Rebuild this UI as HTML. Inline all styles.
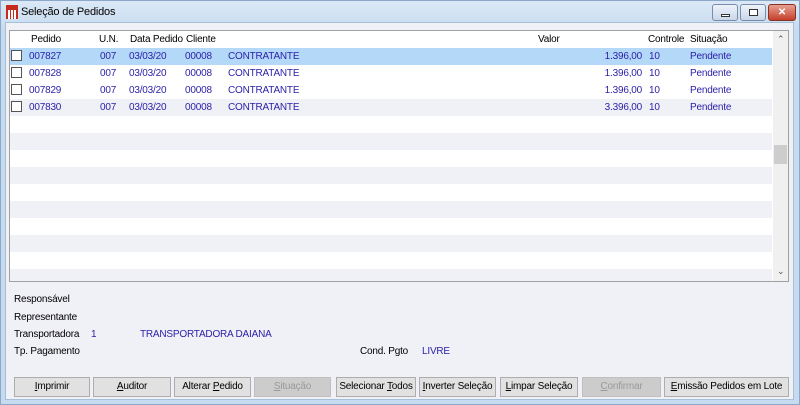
<!DOCTYPE html>
<html><head><meta charset="utf-8"><style>
*{margin:0;padding:0;box-sizing:border-box}
body{width:800px;height:405px;background:#c9dcf0;font-family:"Liberation Sans",sans-serif;font-size:10px;letter-spacing:-0.2px;color:#000;position:relative;overflow:hidden}
.win{position:absolute;left:0;top:0;width:800px;height:405px;background:linear-gradient(#dbe8f6,#c7dbf0 30px);border:1px solid #8ba8c8}
.title{position:absolute;left:20px;top:5px;font-size:11px}
.body{position:absolute;left:5px;top:22px;width:789px;height:378px;background:#f0f0f7;border:1px solid #a8bfd8}
.grid{position:absolute;left:9px;top:30px;width:780px;height:252px;background:#fff;border:1px solid #a0a0a0;overflow:hidden}
.r{position:absolute;left:0;width:762px;height:17px}
.t{position:absolute;white-space:nowrap}
.b{color:#2a1fa8}
.cb{position:absolute;left:2px;width:11px;height:11px;border:1px solid #555;background:#fff}
.sb{position:absolute;left:763px;top:0;width:16px;height:250px;background:#f0f0f0}
.btn{position:absolute;top:377px;height:20px;background:#e1e1e1;border:1px solid #adadad;text-align:center;line-height:18px;white-space:nowrap;overflow:hidden}
.dis{color:#9a9a9a;background:#ccc;border-color:#bfbfbf}
.lbl{position:absolute;white-space:nowrap}
.wb{position:absolute;top:3px;height:17px;border:1px solid #7a8ca8;border-radius:3px;background:linear-gradient(#eef3fa,#c9d7ea)}
.v{position:absolute;width:80px;text-align:right;left:553px;top:4px;white-space:nowrap}
</style></head><body>
<div class="win">
<svg style="position:absolute;left:5px;top:4px" width="12" height="14"><rect x="0" y="0" width="12" height="14" fill="#c62a1c"/><rect x="2" y="5" width="2" height="9" fill="#fff"/><rect x="5" y="5" width="2" height="9" fill="#fff"/><rect x="8" y="5" width="2" height="9" fill="#fff"/></svg>
<div class="title">Seleção de Pedidos</div>
<div class="wb" style="left:711px;width:26px"><div style="position:absolute;left:8px;top:9px;width:9px;height:3px;background:#fff;border:1px solid #333"></div></div>
<div class="wb" style="left:739px;width:26px"><div style="position:absolute;left:8px;top:4px;width:9px;height:7px;border:1px solid #333;background:#fff"></div></div>
<div class="wb" style="left:767px;width:28px;background:linear-gradient(#e8a090,#c4402c);border-color:#8a3020;color:#fff;text-align:center;font-weight:bold;line-height:15px">✕</div>
</div>
<div class="body"></div>
<div class="grid">
<div class="t" style="left:21px;top:3px">Pedido</div>
<div class="t" style="left:89px;top:3px">U.N.</div>
<div class="t" style="left:120px;top:3px">Data Pedido</div>
<div class="t" style="left:176px;top:3px">Cliente</div>
<div class="t" style="left:528px;top:3px">Valor</div>
<div class="t" style="left:638px;top:3px">Controle</div>
<div class="t" style="left:680px;top:3px">Situação</div>
<div class="r" style="top:17px;background:#b3d8f8"></div>
<div class="r" style="top:68px;background:#f0f0f7"></div>
<div class="r" style="top:102px;background:#f0f0f7"></div>
<div class="r" style="top:136px;background:#f0f0f7"></div>
<div class="r" style="top:170px;background:#f0f0f7"></div>
<div class="r" style="top:204px;background:#f0f0f7"></div>
<div class="r" style="top:238px;background:#f0f0f7"></div>
<div class="sb"><div style="position:absolute;left:4px;top:3px;font-size:9px;color:#555">⌃</div><div style="position:absolute;left:1px;top:114px;width:13px;height:19px;background:#cdcdcd"></div><div style="position:absolute;left:4px;top:235px;font-size:9px;color:#555">⌄</div></div>
</div>
<div class="lbl" style="left:14px;top:294px">Responsável</div>
<div class="lbl" style="left:14px;top:312px">Representante</div>
<div class="lbl" style="left:14px;top:329px">Transportadora</div>
<div class="lbl b" style="left:91px;top:329px">1</div>
<div class="lbl b" style="left:140px;top:329px">TRANSPORTADORA DAIANA</div>
<div class="lbl" style="left:14px;top:346px">Tp. Pagamento</div>
<div class="lbl" style="left:360px;top:346px">Cond. Pgto</div>
<div class="lbl b" style="left:422px;top:346px">LIVRE</div>
<div class="btn" style="left:14px;width:76px"><u>I</u>mprimir</div>
<div class="btn" style="left:93px;width:78px"><u>A</u>uditor</div>
<div class="btn" style="left:174px;width:77px">Alterar <u>P</u>edido</div>
<div class="btn dis" style="left:254px;width:77px"><u>S</u>ituação</div>
<div class="btn" style="left:336px;width:80px">Selecionar <u>T</u>odos</div>
<div class="btn" style="left:419px;width:77px"><u>I</u>nverter Seleção</div>
<div class="btn" style="left:500px;width:78px"><u>L</u>impar Seleção</div>
<div class="btn dis" style="left:582px;width:79px"><u>C</u>onfirmar</div>
<div class="btn" style="left:664px;width:125px"><u>E</u>missão Pedidos em Lote</div>
<div style="position:absolute;left:9px;top:47px;width:762px">
 <div style="position:absolute;top:0"><div class="cb" style="top:3px"></div><span class="t b" style="left:20px;top:4px">007827</span><span class="t b" style="left:91px;top:4px">007</span><span class="t b" style="left:120px;top:4px">03/03/20</span><span class="t b" style="left:176px;top:4px">00008</span><span class="t b" style="left:219px;top:4px">CONTRATANTE</span><span class="v b">1.396,00</span><span class="t b" style="left:640px;top:4px">10</span><span class="t b" style="left:681px;top:4px">Pendente</span></div>
 <div style="position:absolute;top:17px"><div class="cb" style="top:3px"></div><span class="t b" style="left:20px;top:4px">007828</span><span class="t b" style="left:91px;top:4px">007</span><span class="t b" style="left:120px;top:4px">03/03/20</span><span class="t b" style="left:176px;top:4px">00008</span><span class="t b" style="left:219px;top:4px">CONTRATANTE</span><span class="v b">1.396,00</span><span class="t b" style="left:640px;top:4px">10</span><span class="t b" style="left:681px;top:4px">Pendente</span></div>
 <div style="position:absolute;top:34px"><div class="cb" style="top:3px"></div><span class="t b" style="left:20px;top:4px">007829</span><span class="t b" style="left:91px;top:4px">007</span><span class="t b" style="left:120px;top:4px">03/03/20</span><span class="t b" style="left:176px;top:4px">00008</span><span class="t b" style="left:219px;top:4px">CONTRATANTE</span><span class="v b">1.396,00</span><span class="t b" style="left:640px;top:4px">10</span><span class="t b" style="left:681px;top:4px">Pendente</span></div>
 <div style="position:absolute;top:51px"><div class="cb" style="top:3px"></div><span class="t b" style="left:20px;top:4px">007830</span><span class="t b" style="left:91px;top:4px">007</span><span class="t b" style="left:120px;top:4px">03/03/20</span><span class="t b" style="left:176px;top:4px">00008</span><span class="t b" style="left:219px;top:4px">CONTRATANTE</span><span class="v b">3.396,00</span><span class="t b" style="left:640px;top:4px">10</span><span class="t b" style="left:681px;top:4px">Pendente</span></div>
</div>
</body></html>
